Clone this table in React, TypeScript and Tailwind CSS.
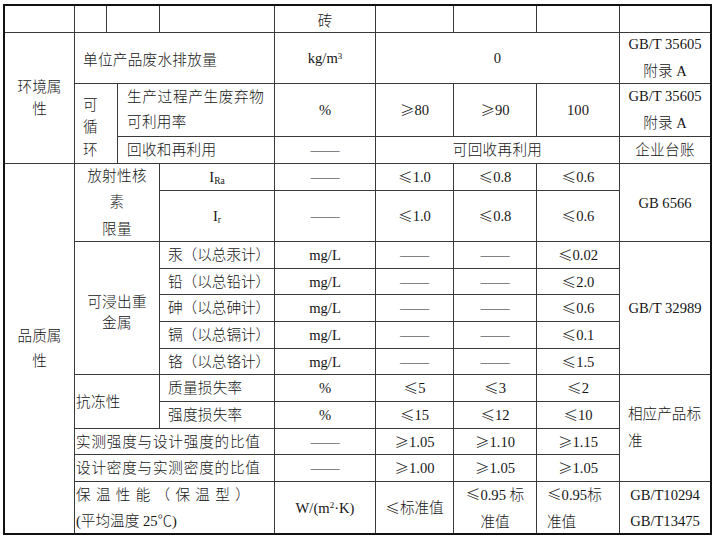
import type { ReactNode } from 'react'

/**
 * Table page: 环境属性 / 品质属性 requirements for 砖. Drawn as one CSS grid whose
 * 1px gaps show the dark background as the ruling lines; merged cells use spans.
 */
function C({ className = '', children }: { className?: string; children?: ReactNode }) {
  return <div className={`flex items-center justify-center bg-white text-center ${className}`}>{children}</div>
}

function L({ className = '', children }: { className?: string; children?: ReactNode }) {
  return <div className={`flex items-center justify-start bg-white text-left ${className}`}>{children}</div>
}

// ≤ / ≥ come out full-width in the source doc, so set them in the CJK face
function V({ s }: { s: string }) {
  return (
    <>
      {s.split(/([≤≥])/).map((p, i) =>
        p === '≤' || p === '≥' ? (
          <span key={i} className="font-['Noto_Sans_CJK_SC',sans-serif]">
            {p}
          </span>
        ) : (
          p
        ),
      )}
    </>
  )
}

const dash = '——'

export default function App() {
  return (
    <div className="h-[540px] w-[715px] overflow-hidden bg-white font-['Liberation_Serif','Noto_Sans_CJK_SC',serif] text-[14.6px] leading-[26px] font-light text-[#151515]">
      <div className="mt-[4px] ml-[3px] grid w-fit grid-cols-[69px_31px_10px_41px_114px_100px_77px_82px_82px_90px] grid-rows-[26px_50px_52px_26px_26px_50px_26px_25px_26px_26px_25px_26px_26px_25px_26px_51px] gap-px border-2 border-[#111] bg-[#3a3a3a]">
        {/* header row (carried over from previous page) */}
        <C className="col-start-1 row-start-1" />
        <C className="col-start-2 row-start-1" />
        <C className="col-start-3 col-span-2 row-start-1" />
        <C className="col-start-5 row-start-1" />
        <C className="col-start-6 row-start-1 pt-[3px]">砖</C>
        <C className="col-start-7 row-start-1" />
        <C className="col-start-8 row-start-1" />
        <C className="col-start-9 row-start-1" />
        <C className="col-start-10 row-start-1" />

        {/* 环境属性 */}
        <C className="col-start-1 row-start-2 row-span-3 leading-[22px]">
          <div>环境属<br />性</div>
        </C>
        <L className="col-start-2 col-span-4 row-start-2 pt-[4px] pl-[8px] tracking-[0.3px]">单位产品废水排放量</L>
        <C className="col-start-6 row-start-2">
          <span>kg/m<sup className="text-[9px]">3</sup></span>
        </C>
        <C className="col-start-7 col-span-3 row-start-2">0</C>
        <C className="col-start-10 row-start-2 leading-[27px]">
          <div>GB/T 35605<br />附录 A</div>
        </C>

        <L className="col-start-2 col-span-2 row-start-3 row-span-2 pt-[8px] pl-[8px] leading-[22.5px]">
          <div>可<br />循<br />环</div>
        </L>
        <L className="col-start-4 col-span-2 row-start-3 pl-[9px] leading-[25px]">
          <div>
            <div className="tracking-[0.7px]">生产过程产生废弃物</div>
            <div className="tracking-[0.3px]">可利用率</div>
          </div>
        </L>
        <C className="col-start-6 row-start-3">%</C>
        <C className="col-start-7 row-start-3"><V s="≥80" /></C>
        <C className="col-start-8 row-start-3"><V s="≥90" /></C>
        <C className="col-start-9 row-start-3">100</C>
        <C className="col-start-10 row-start-3 leading-[27px]">
          <div>GB/T 35605<br />附录 A</div>
        </C>

        <L className="col-start-4 col-span-2 row-start-4 pl-[9px] tracking-[0.3px]">回收和再利用</L>
        <C className="col-start-6 row-start-4">{dash}</C>
        <C className="col-start-7 col-span-3 row-start-4 tracking-[0.3px]">可回收再利用</C>
        <C className="col-start-10 row-start-4 tracking-[0.3px]">企业台账</C>

        {/* 品质属性 */}
        <C className="col-start-1 row-start-5 row-span-12 leading-[25px]">
          <div>品质属<br />性</div>
        </C>

        <C className="col-start-2 col-span-3 row-start-5 row-span-2 leading-[26.5px] tracking-[0.3px]">
          <div>放射性核<br />素<br />限量</div>
        </C>
        <C className="col-start-5 row-start-5">
          <span>I<sub className="text-[9.5px]">Ra</sub></span>
        </C>
        <C className="col-start-6 row-start-5">{dash}</C>
        <C className="col-start-7 row-start-5"><V s="≤1.0" /></C>
        <C className="col-start-8 row-start-5"><V s="≤0.8" /></C>
        <C className="col-start-9 row-start-5"><V s="≤0.6" /></C>
        <C className="col-start-10 row-start-5 row-span-2">GB 6566</C>

        <C className="col-start-5 row-start-6">
          <span>I<sub className="text-[9.5px]">r</sub></span>
        </C>
        <C className="col-start-6 row-start-6">{dash}</C>
        <C className="col-start-7 row-start-6"><V s="≤1.0" /></C>
        <C className="col-start-8 row-start-6"><V s="≤0.8" /></C>
        <C className="col-start-9 row-start-6"><V s="≤0.6" /></C>

        <C className="col-start-2 col-span-3 row-start-7 row-span-5 pt-[10px] leading-[21px] tracking-[0.3px]">
          <div>可浸出重<br />金属</div>
        </C>
        <L className="col-start-5 row-start-7 pl-[8px]">汞（以总汞计）</L>
        <C className="col-start-6 row-start-7">mg/L</C>
        <C className="col-start-7 row-start-7">{dash}</C>
        <C className="col-start-8 row-start-7">{dash}</C>
        <C className="col-start-9 row-start-7"><V s="≤0.02" /></C>
        <L className="col-start-5 row-start-8 pl-[8px]">铅（以总铅计）</L>
        <C className="col-start-6 row-start-8">mg/L</C>
        <C className="col-start-7 row-start-8">{dash}</C>
        <C className="col-start-8 row-start-8">{dash}</C>
        <C className="col-start-9 row-start-8"><V s="≤2.0" /></C>
        <L className="col-start-5 row-start-9 pl-[8px]">砷（以总砷计）</L>
        <C className="col-start-6 row-start-9">mg/L</C>
        <C className="col-start-7 row-start-9">{dash}</C>
        <C className="col-start-8 row-start-9">{dash}</C>
        <C className="col-start-9 row-start-9"><V s="≤0.6" /></C>
        <L className="col-start-5 row-start-10 pl-[8px]">镉（以总镉计）</L>
        <C className="col-start-6 row-start-10">mg/L</C>
        <C className="col-start-7 row-start-10">{dash}</C>
        <C className="col-start-8 row-start-10">{dash}</C>
        <C className="col-start-9 row-start-10"><V s="≤0.1" /></C>
        <L className="col-start-5 row-start-11 pl-[8px]">铬（以总铬计）</L>
        <C className="col-start-6 row-start-11">mg/L</C>
        <C className="col-start-7 row-start-11">{dash}</C>
        <C className="col-start-8 row-start-11">{dash}</C>
        <C className="col-start-9 row-start-11"><V s="≤1.5" /></C>
        <C className="col-start-10 row-start-7 row-span-5">GB/T 32989</C>

        <L className="col-start-2 col-span-3 row-start-12 row-span-2 pl-[1px] tracking-[0.3px]">抗冻性</L>
        <L className="col-start-5 row-start-12 pl-[8px] tracking-[0.3px]">质量损失率</L>
        <C className="col-start-6 row-start-12">%</C>
        <C className="col-start-7 row-start-12"><V s="≤5" /></C>
        <C className="col-start-8 row-start-12"><V s="≤3" /></C>
        <C className="col-start-9 row-start-12"><V s="≤2" /></C>
        <L className="col-start-10 row-start-12 row-span-4 pl-[8px] leading-[27px]">
          <div>相应产品标<br />准</div>
        </L>

        <L className="col-start-5 row-start-13 pl-[8px] tracking-[0.3px]">强度损失率</L>
        <C className="col-start-6 row-start-13">%</C>
        <C className="col-start-7 row-start-13"><V s="≤15" /></C>
        <C className="col-start-8 row-start-13"><V s="≤12" /></C>
        <C className="col-start-9 row-start-13"><V s="≤10" /></C>

        <L className="col-start-2 col-span-4 row-start-14 pl-[1px] tracking-[0.8px]">实测强度与设计强度的比值</L>
        <C className="col-start-6 row-start-14">{dash}</C>
        <C className="col-start-7 row-start-14"><V s="≥1.05" /></C>
        <C className="col-start-8 row-start-14"><V s="≥1.10" /></C>
        <C className="col-start-9 row-start-14"><V s="≥1.15" /></C>

        <L className="col-start-2 col-span-4 row-start-15 pl-[1px] tracking-[0.8px]">设计密度与实测密度的比值</L>
        <C className="col-start-6 row-start-15">{dash}</C>
        <C className="col-start-7 row-start-15"><V s="≥1.00" /></C>
        <C className="col-start-8 row-start-15"><V s="≥1.05" /></C>
        <C className="col-start-9 row-start-15"><V s="≥1.05" /></C>

        <L className="col-start-2 col-span-4 row-start-16 pl-[1px] leading-[26px]">
          <div>
            <div className="tracking-[5.3px]">保温性能（保温型）</div>
            <div>(平均温度 25℃)</div>
          </div>
        </L>
        <C className="col-start-6 row-start-16">
          <span>W/(m<sup className="text-[9px]">2</sup>·K)</span>
        </C>
        <C className="col-start-7 row-start-16"><V s="≤标准值" /></C>
        <C className="col-start-8 row-start-16 leading-[27px]">
          <div><V s="≤0.95 标" /><br />准值</div>
        </C>
        <L className="col-start-9 row-start-16 pl-[10px] leading-[27px]">
          <div><V s="≤0.95标" /><br />准值</div>
        </L>
        <C className="col-start-10 row-start-16 leading-[26px]">
          <div>GB/T10294<br />GB/T13475</div>
        </C>
      </div>
    </div>
  )
}
